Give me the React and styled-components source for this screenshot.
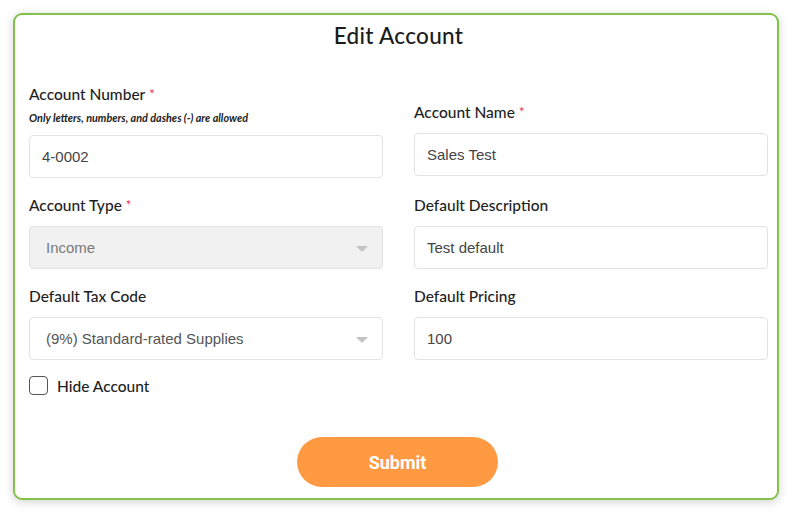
import React, { useState } from "react";
import styled, { createGlobalStyle } from "styled-components";

const GlobalStyle = createGlobalStyle`
    html, body {
        margin: 0;
        padding: 0;
        background: #ffffff;
    }
    * {
        box-sizing: border-box;
    }
`;

const Page = styled.div`
    width: 792px;
    height: 513px;
    padding: 13px 13px 13px 13px;
`;

const Card = styled.form`
    height: 100%;
    border: 2px solid #82c24b;
    border-radius: 9px;
    background: #ffffff;
    box-shadow: 0 2px 10px rgba(0, 0, 0, 0.18);
    padding: 8px 9px 0 14px;
    display: flex;
    flex-direction: column;
    font-family: "Lato", "Liberation Sans", sans-serif;
`;

const Title = styled.h2`
    margin: 0;
    text-align: center;
    font-family: "Lato", sans-serif;
    font-weight: 500;
    font-size: 22.5px;
    color: #1b1b1b;
    letter-spacing: 0.3px;
    line-height: 26px;
`;

const Grid = styled.div`
    margin-top: 35px;
    display: grid;
    grid-template-columns: 354px 354px;
    column-gap: 31px;
    row-gap: 17px;
    align-items: end;
`;

const Field = styled.div`
    display: flex;
    flex-direction: column;
    margin-bottom: ${(props) => props.lift || 0}px;
`;

const Label = styled.label`
    font-size: 15.5px;
    font-weight: 500;
    color: #1e1e1e;
    line-height: 20px;
    margin-bottom: ${(props) => (props.hint ? "8px" : "11px")};
`;

const Star = styled.span`
    color: #e8364f;
    margin-left: 4px;
    font-size: 13px;
    vertical-align: top;
`;

const Hint = styled.div`
    font-size: 10.8px;
    font-style: italic;
    font-weight: 700;
    color: #222;
    margin-bottom: 11px;
    line-height: 12px;
`;

const Input = styled.input`
    height: 43px;
    width: 100%;
    border: 1px solid #e3e3e3;
    border-radius: 4px;
    padding: 0 12px;
    font-family: "Liberation Sans", Arial, sans-serif;
    font-size: 15px;
    color: #444444;
    background: #fff;
    outline: none;
`;

const SelectBox = styled.div`
    height: 43px;
    border: 1px solid #e3e3e3;
    border-radius: 4px;
    padding: 0 14px 0 16px;
    display: flex;
    align-items: center;
    justify-content: space-between;
    background: ${(props) => (props.disabled ? "#f1f1f1" : "#ffffff")};
    color: ${(props) => (props.disabled ? "#7a7a7a" : "#555555")};
    font-family: "Liberation Sans", Arial, sans-serif;
    font-size: 15px;
`;

const Caret = styled.span`
    width: 0;
    height: 0;
    border-left: 6px solid transparent;
    border-right: 6px solid transparent;
    border-top: 6px solid #c4c4c4;
    margin-top: 2px;
`;

const CheckRow = styled.label`
    margin-top: 16px;
    display: flex;
    align-items: center;
    gap: 9px;
    font-size: 15.5px;
    font-weight: 500;
    color: #1e1e1e;
    cursor: pointer;
`;

const CheckBox = styled.span`
    width: 19px;
    height: 19px;
    border: 1.5px solid #555;
    border-radius: 4px;
    background: ${(props) => (props.checked ? "#82c24b" : "#fff")};
`;

const Footer = styled.div`
    display: flex;
    justify-content: center;
    margin-top: 42px;
    padding-right: 2px;
`;

const SubmitButton = styled.button`
    width: 201px;
    height: 50px;
    border: none;
    border-radius: 25px;
    background: #ff9a42;
    color: #ffffff;
    font-family: "Roboto", "Liberation Sans", sans-serif;
    font-weight: 700;
    font-size: 18px;
    cursor: pointer;
`;

function App()
{
    const [hidden, setHidden] = useState(false);
    return (
        <Page>
            <GlobalStyle />
            <Card onSubmit={(e) => e.preventDefault()}>
                <Title>Edit Account</Title>
                <Grid>
                    <Field>
                        <Label hint>Account Number<Star>*</Star></Label>
                        <Hint>Only letters, numbers, and dashes (-) are allowed</Hint>
                        <Input defaultValue="4-0002" />
                    </Field>
                    <Field lift={2}>
                        <Label>Account Name<Star>*</Star></Label>
                        <Input defaultValue="Sales Test" />
                    </Field>

                    <Field>
                        <Label>Account Type<Star>*</Star></Label>
                        <SelectBox disabled>
                            Income
                            <Caret />
                        </SelectBox>
                    </Field>
                    <Field>
                        <Label>Default Description</Label>
                        <Input defaultValue="Test default" />
                    </Field>

                    <Field>
                        <Label>Default Tax Code</Label>
                        <SelectBox>
                            (9%) Standard-rated Supplies
                            <Caret />
                        </SelectBox>
                    </Field>
                    <Field>
                        <Label>Default Pricing</Label>
                        <Input defaultValue="100" />
                    </Field>
                </Grid>

                <CheckRow onClick={() => setHidden(!hidden)}>
                    <CheckBox checked={hidden} />
                    Hide Account
                </CheckRow>

                <Footer>
                    <SubmitButton type="submit">Submit</SubmitButton>
                </Footer>
            </Card>
        </Page>
    );
}

export default App;
